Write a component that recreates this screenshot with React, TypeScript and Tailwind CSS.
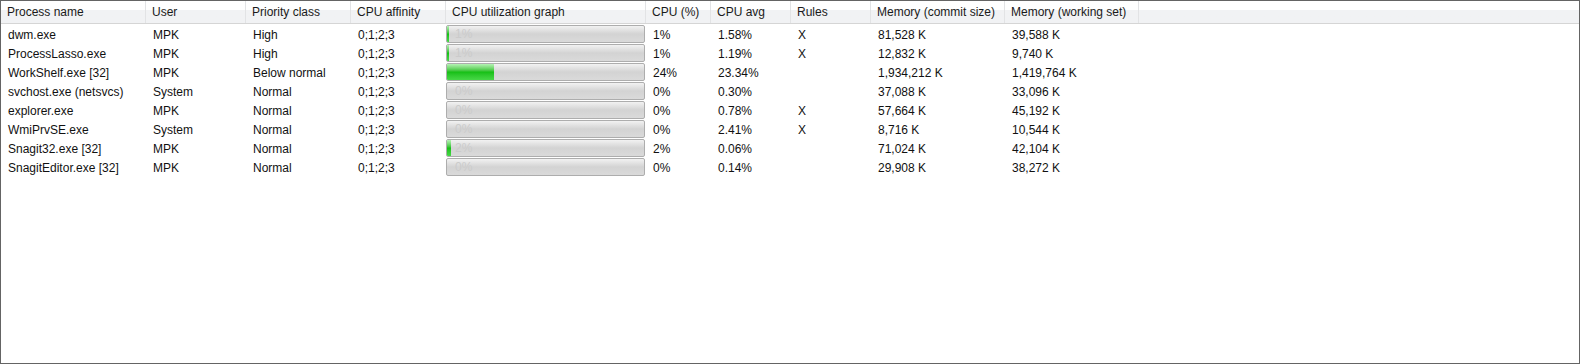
import React from 'react';

type Proc = {
  name: string;
  user: string;
  priority: string;
  affinity: string;
  cpu: number;
  avg: string;
  rules: string;
  commit: string;
  working: string;
};

const columns = [
  { label: 'Process name', width: 'w-[145px]' },
  { label: 'User', width: 'w-[100px]' },
  { label: 'Priority class', width: 'w-[105px]' },
  { label: 'CPU affinity', width: 'w-[95px]' },
  { label: 'CPU utilization graph', width: 'w-[200px]' },
  { label: 'CPU (%)', width: 'w-[65px]' },
  { label: 'CPU avg', width: 'w-[80px]' },
  { label: 'Rules', width: 'w-[80px]' },
  { label: 'Memory (commit size)', width: 'w-[134px]' },
  { label: 'Memory (working set)', width: 'w-[134px]' },
];

const processes: Proc[] = [
  { name: 'dwm.exe', user: 'MPK', priority: 'High', affinity: '0;1;2;3', cpu: 1, avg: '1.58%', rules: 'X', commit: '81,528 K', working: '39,588 K' },
  { name: 'ProcessLasso.exe', user: 'MPK', priority: 'High', affinity: '0;1;2;3', cpu: 1, avg: '1.19%', rules: 'X', commit: '12,832 K', working: '9,740 K' },
  { name: 'WorkShelf.exe [32]', user: 'MPK', priority: 'Below normal', affinity: '0;1;2;3', cpu: 24, avg: '23.34%', rules: '', commit: '1,934,212 K', working: '1,419,764 K' },
  { name: 'svchost.exe (netsvcs)', user: 'System', priority: 'Normal', affinity: '0;1;2;3', cpu: 0, avg: '0.30%', rules: '', commit: '37,088 K', working: '33,096 K' },
  { name: 'explorer.exe', user: 'MPK', priority: 'Normal', affinity: '0;1;2;3', cpu: 0, avg: '0.78%', rules: 'X', commit: '57,664 K', working: '45,192 K' },
  { name: 'WmiPrvSE.exe', user: 'System', priority: 'Normal', affinity: '0;1;2;3', cpu: 0, avg: '2.41%', rules: 'X', commit: '8,716 K', working: '10,544 K' },
  { name: 'Snagit32.exe [32]', user: 'MPK', priority: 'Normal', affinity: '0;1;2;3', cpu: 2, avg: '0.06%', rules: '', commit: '71,024 K', working: '42,104 K' },
  { name: 'SnagitEditor.exe [32]', user: 'MPK', priority: 'Normal', affinity: '0;1;2;3', cpu: 0, avg: '0.14%', rules: '', commit: '29,908 K', working: '38,272 K' },
];

const UsageBar: React.FC<{ value: number }> = ({ value }) => {
  return (
    <div className="relative h-[18px] w-[199px] rounded-[2px] border border-[#adadad] bg-linear-to-b from-[#f2f2f2] via-[#d3d3d3] to-[#dadada] overflow-hidden">
      <span className="absolute left-[8px] top-0 leading-[16px] text-[12px] text-[#cbcbcb]">{value}%</span>
      {value > 0 && (
        <div
          className="absolute left-0 top-0 bottom-0 bg-linear-to-b from-[#b4f2b4] via-[#14c014] to-[#46d846]"
          style={{ width: `${Math.max(2, Math.round(value * 1.97))}px` }}
        />
      )}
    </div>
  );
};

const Cell: React.FC<{ width: string; children?: React.ReactNode }> = ({ width, children }) => (
  <div className={`${width} shrink-0 pl-[7px] whitespace-nowrap overflow-hidden`}>{children}</div>
);

export default function App() {
  return (
    <div
      className="w-[1580px] h-[364px] border border-[#646464] bg-white text-[12px] text-[#111] overflow-hidden"
      style={{ fontFamily: '"Liberation Sans", Arial, sans-serif' }}
    >
      {/* Column header */}
      <div className="flex h-[23px] border-b border-[#d5d5d5] bg-linear-to-b from-white from-40% to-[#f1f2f4] to-40%">
        {columns.map((col) => (
          <div
            key={col.label}
            className={`${col.width} shrink-0 border-r border-[#e2e3e5] pl-[6px] flex items-center text-[#1a1a1a] whitespace-nowrap`}
          >
            {col.label}
          </div>
        ))}
        <div className="flex-1" />
      </div>

      {/* Rows */}
      <div className="pt-px">
        {processes.map((p) => (
          <div key={p.name} className="flex h-[19px] items-center">
            <Cell width="w-[145px]">{p.name}</Cell>
            <Cell width="w-[100px]">{p.user}</Cell>
            <Cell width="w-[105px]">{p.priority}</Cell>
            <Cell width="w-[95px]">{p.affinity}</Cell>
            <div className="w-[200px] shrink-0 flex items-start h-[19px]">
              <UsageBar value={p.cpu} />
            </div>
            <Cell width="w-[65px]">{p.cpu}%</Cell>
            <Cell width="w-[80px]">{p.avg}</Cell>
            <Cell width="w-[80px]">{p.rules}</Cell>
            <Cell width="w-[134px]">{p.commit}</Cell>
            <Cell width="w-[134px]">{p.working}</Cell>
          </div>
        ))}
      </div>
    </div>
  );
}
